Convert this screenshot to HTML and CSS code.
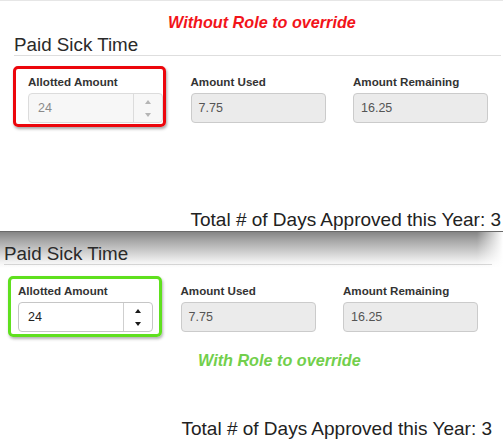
FILE: index.html
```html
<!DOCTYPE html>
<html>
<head>
<meta charset="utf-8">
<link rel="stylesheet" href="styles.css">
</head>
<body>
<section class="shot shot-top">
  <p class="note note-red">Without Role to override</p>
  <div class="panel panel-top">
    <h2 class="title">Paid Sick Time</h2>
    <div class="fields">
      <div class="field mark mark-red">
        <label class="lbl">Allotted Amount</label>
        <div class="box box-num box-locked">
          <span class="val val-num">24</span>
          <span class="spin"><i class="arr up"></i><i class="arr down"></i></span>
        </div>
      </div>
      <div class="field">
        <label class="lbl">Amount Used</label>
        <div class="box box-off"><span class="val">7.75</span></div>
      </div>
      <div class="field">
        <label class="lbl">Amount Remaining</label>
        <div class="box box-off"><span class="val">16.25</span></div>
      </div>
    </div>
    <p class="total total-top">Total # of Days Approved this Year: 3</p>
  </div>
</section>
<section class="shot shot-bottom">
  <div class="panel panel-bottom">
    <h2 class="title title-shaded">Paid Sick Time</h2>
    <div class="fields">
      <div class="field mark mark-green">
        <label class="lbl">Allotted Amount</label>
        <div class="box box-num box-live">
          <span class="val val-num">24</span>
          <span class="spin"><i class="arr up"></i><i class="arr down"></i></span>
        </div>
      </div>
      <div class="field">
        <label class="lbl">Amount Used</label>
        <div class="box box-off"><span class="val">7.75</span></div>
      </div>
      <div class="field">
        <label class="lbl">Amount Remaining</label>
        <div class="box box-off"><span class="val">16.25</span></div>
      </div>
    </div>
    <p class="note note-green">With Role to override</p>
    <p class="total total-bottom">Total # of Days Approved this Year: 3</p>
  </div>
</section>
</body>
</html>
```

FILE: styles.css
```css
html, body {
  margin: 0;
  padding: 0;
  background: #fff;
}
body {
  width: 503px;
  height: 439px;
  overflow: hidden;
  font-family: "Liberation Sans", Arial, Helvetica, sans-serif;
  color: #222;
}
.shot {
  box-sizing: border-box;
  overflow: hidden;
}
.shot-top {
  height: 231px;
  border-top: 1px solid #e6e6e6;
  padding-top: 13px;
}
.shot-bottom {
  height: 208px;
  border-top: 1px solid #6a6a6a;
  padding-top: 11px;
  background:
    linear-gradient(to left, #fff 0, rgba(255,255,255,0) 26px),
    linear-gradient(to bottom, #858585 0, #a5a5a5 8px, #cfcfcf 20px, #f2f2f2 30px, #fff 36px);
}
.note {
  margin: 0;
  font-size: 16.2px;
  line-height: 17px;
  font-weight: bold;
  font-style: italic;
}
.note-red {
  color: #f2141a;
  padding-left: 168px;
}
.note-green {
  color: #72cf4c;
  padding-left: 194px;
  margin-top: 20px;
}
.panel {
  width: 488px;
}
.panel-top {
  margin-left: 14px;
  margin-top: 3px;
  width: 487px;
}
.panel-bottom {
  margin-left: 4px;
}
.title {
  margin: 0;
  font-size: 18.8px;
  line-height: 21px;
  font-weight: normal;
  color: #2a2a2a;
  border-bottom: 1px solid #dedede;
}
.title-shaded {
  border-bottom-color: rgba(0,0,0,0.14);
}
.fields {
  display: flex;
  gap: 27.5px;
  margin-top: 19px;
  margin-left: 14px;
}
.field {
  width: 135px;
  position: relative;
}
.lbl {
  display: block;
  font-size: 11.6px;
  line-height: 14px;
  font-weight: bold;
  color: #333;
  margin-bottom: 4px;
}
.box {
  display: flex;
  height: 30px;
  box-sizing: border-box;
  border: 1px solid #cbcbcb;
  border-radius: 4px;
}
.val {
  flex: 1;
  font-size: 12.5px;
  line-height: 28px;
  padding-left: 7px;
  color: #555;
}
.val-num {
  padding-left: 9px;
}
.box-off {
  background: #ebebeb;
}
.box-locked {
  background: #f7f7f7;
  border-color: #dcdcdc;
}
.box-locked .val {
  color: #8a8a8a;
}
.box-live {
  background: #fff;
  border-color: #c6c6c6;
}
.box-live .val {
  color: #222;
}
.spin {
  width: 28px;
  border-left: 1px solid #dcdcdc;
  display: flex;
  flex-direction: column;
  align-items: center;
  justify-content: center;
  gap: 9px;
}
.box-live .spin {
  border-left-color: #cfcfcf;
}
.arr {
  display: block;
  width: 0;
  height: 0;
  border-left: 3.5px solid transparent;
  border-right: 3.5px solid transparent;
}
.up {
  border-bottom: 4px solid #b5b5b5;
}
.down {
  border-top: 4px solid #b5b5b5;
}
.box-live .up {
  border-bottom-color: #1a1a1a;
}
.box-live .down {
  border-top-color: #1a1a1a;
}
.mark::before {
  content: "";
  position: absolute;
  box-sizing: border-box;
  height: 61px;
  border-width: 3px;
  border-style: solid;
  border-radius: 5px;
  pointer-events: none;
}
.mark-red::before {
  top: -9px;
  left: -15px;
  width: 153px;
  border-color: #ec060c;
  box-shadow: 1px 2px 3px rgba(0,0,0,0.35);
}
.mark-green::before {
  top: -8px;
  left: -10px;
  width: 154px;
  border-color: #5fe01e;
  box-shadow: 1px 2px 3px rgba(0,0,0,0.3);
}
.total {
  margin: 0;
  font-size: 19px;
  line-height: 21px;
  text-align: right;
  color: #222;
}
.total-top {
  margin-top: 86px;
}
.total-bottom {
  margin-top: 49px;
}
```
